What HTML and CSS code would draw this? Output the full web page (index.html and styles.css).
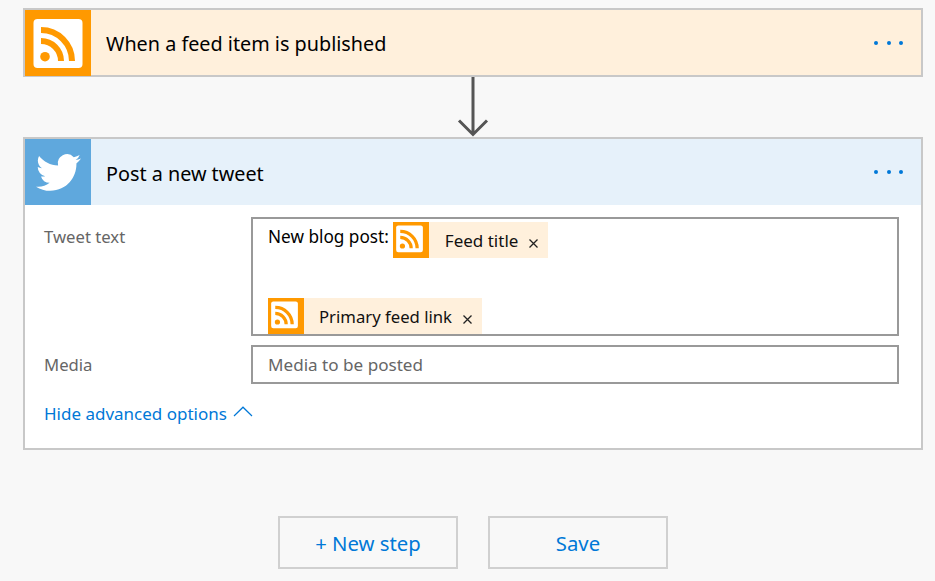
FILE: index.html
```html
<!DOCTYPE html>
<html lang="en">
<head>
<meta charset="utf-8">
<title>Flow</title>
<link rel="stylesheet" href="styles.css">
</head>
<body>
<svg class="defs" width="0" height="0" aria-hidden="true">
  <symbol id="rss" viewBox="0 0 66 66">
    <rect x="8.5" y="9" width="49" height="49" rx="4" fill="#fff"/>
    <circle cx="20" cy="46.7" r="4.8" fill="#ff9900"/>
    <path d="M16 20A31 31 0 0 1 47 51M16 31A20 20 0 0 1 36 51" fill="none" stroke="#ff9900" stroke-width="6"/>
  </symbol>
</svg>
<main class="page">
  <section class="card">
    <header class="card-head card-head-short head-rss">
      <div class="tile tile-rss"><svg class="tile-svg"><use href="#rss"/></svg></div>
      <h2 class="card-title">When a feed item is published</h2>
      <div class="dots"><i></i><i></i><i></i></div>
    </header>
  </section>
  <div class="connector">
    <svg width="32" height="60" viewBox="0 0 32 60"><path d="M16 0V58M2 43.5L16 57.5L30 43.5" fill="none" stroke="#555" stroke-width="3"/></svg>
  </div>
  <section class="card">
    <header class="card-head head-tw">
      <div class="tile tile-tw">
        <svg class="bird" viewBox="0 0 24 24"><path fill="#fff" d="M23.953 4.57a10 10 0 0 1-2.825.775 4.958 4.958 0 0 0 2.163-2.723c-.951.555-2.005.959-3.127 1.184a4.92 4.92 0 0 0-8.384 4.482C7.69 8.095 4.067 6.13 1.64 3.162a4.822 4.822 0 0 0-.666 2.475c0 1.71.87 3.213 2.188 4.096a4.904 4.904 0 0 1-2.228-.616v.06a4.923 4.923 0 0 0 3.946 4.827 4.996 4.996 0 0 1-2.212.085 4.936 4.936 0 0 0 4.604 3.417 9.867 9.867 0 0 1-6.102 2.105c-.39 0-.779-.023-1.17-.067a13.995 13.995 0 0 0 7.557 2.209c9.053 0 13.998-7.496 13.998-13.985 0-.21 0-.42-.015-.63A9.935 9.935 0 0 0 24 4.59z"/></svg>
      </div>
      <h2 class="card-title">Post a new tweet</h2>
      <div class="dots"><i></i><i></i><i></i></div>
    </header>
    <div class="card-body">
      <div class="field">
        <label class="field-label">Tweet text</label>
        <div class="box box-tall">
          <div class="box-row">
            <span class="box-text">New blog post:</span>
            <span class="chip">
              <span class="chip-tile"><svg class="chip-svg" viewBox="2.5 2.5 61 61"><use href="#rss"/></svg></span>
              <span class="chip-label chip-label-wide">Feed title</span>
              <svg class="chip-x" viewBox="0 0 9 9"><path d="M.5.5L8.5 8.5M8.5.5L.5 8.5" stroke="#222" stroke-width="1.3"/></svg>
            </span>
          </div>
          <div class="box-row">
            <span class="chip">
              <span class="chip-tile"><svg class="chip-svg" viewBox="2.5 2.5 61 61"><use href="#rss"/></svg></span>
              <span class="chip-label">Primary feed link</span>
              <svg class="chip-x" viewBox="0 0 9 9"><path d="M.5.5L8.5 8.5M8.5.5L.5 8.5" stroke="#222" stroke-width="1.3"/></svg>
            </span>
          </div>
        </div>
      </div>
      <div class="field field-media">
        <label class="field-label">Media</label>
        <div class="box box-short"><span class="placeholder">Media to be posted</span></div>
      </div>
      <a class="advanced">Hide advanced options
        <svg class="caret" width="20" height="11" viewBox="0 0 20 11"><path d="M1 10L10 1.2L19 10" fill="none" stroke="#0078d7" stroke-width="1.2"/></svg>
      </a>
    </div>
  </section>
  <div class="actions">
    <button class="btn">+ New step</button>
    <button class="btn">Save</button>
  </div>
</main>
</body>
</html>
```
FILE: styles.css
```css
* { box-sizing: border-box; }
html, body { margin: 0; height: 100%; overflow: hidden; }
body {
  background: #f8f8f8;
  font-family: "Noto Sans", "Open Sans", sans-serif;
  color: #000;
}
.defs { position: absolute; }
.page { width: 900px; margin: 8px 0 0 23px; }
.card { border: 2px solid #c8c8c8; background: #fff; }
.card-head { display: flex; align-items: center; height: 66px; }
.card-head-short { height: 65px; }
.card-head-short .dots { margin-top: 1px; }
.head-rss { background: #fff0dc; }
.head-tw { background: #e6f1fa; }
.tile { width: 66px; height: 66px; flex: none; display: flex; align-items: center; justify-content: center; }
.tile-rss { background: #ff9900; }
.tile-tw { background: #5fa8dd; }
.tile-svg { width: 66px; height: 66px; display: block; }
.bird { width: 45px; height: 45px; display: block; }
.card-title { flex: 1; margin: 3px 0 0 15px; font-size: 19.8px; font-weight: 400; line-height: 26px; }
.dots { display: flex; gap: 8.5px; margin-right: 18px; }
.dots i { width: 4px; height: 4px; border-radius: 50%; background: #0078d7; }
.connector { height: 60px; display: flex; justify-content: center; }
.card-body { padding: 12px 22px 0 19px; height: 243px; }
.field { display: flex; }
.field-media { margin-top: 9px; }
.field-label { width: 207px; flex: none; font-size: 16.7px; color: #666; line-height: 24px; padding-top: 8px; }
.box { width: 648px; border: 2px solid #999; background: #fff; }
.box-tall { height: 119px; padding: 3px 15px 0 15px; display: flex; flex-direction: column; justify-content: space-between; }
.box-short { height: 39px; padding: 6px 15px; line-height: 23px; }
.box-row { display: flex; align-items: flex-start; }
.box-text { font-size: 17.2px; line-height: 24px; margin-top: 3px; margin-right: 4px; }
.placeholder { font-size: 17.1px; color: #666; }
.chip { display: flex; align-items: center; height: 36px; background: #fff0dc; }
.chip-tile { width: 36px; height: 36px; background: #ff9900; flex: none; }
.chip-svg { width: 36px; height: 36px; display: block; }
.chip-label { font-size: 16.7px; line-height: 24px; margin: 2px 0 0 15px; color: #111; }
.chip-label-wide { font-size: 17px; margin-left: 16px; }
.chip-x { width: 9px; height: 9px; margin: 6px 10px 0 11px; flex: none; }
.advanced { display: flex; align-items: center; gap: 6px; margin-top: 18px; color: #0078d7; font-size: 17px; line-height: 24px; }
.caret { margin-bottom: 5px; }
.actions { display: flex; justify-content: center; gap: 30px; margin-top: 66px; }
.btn { width: 180px; height: 53px; border: 2px solid #d0d0d0; background: transparent; color: #0078d7; font-family: inherit; font-size: 20.3px; padding: 0; }
```
